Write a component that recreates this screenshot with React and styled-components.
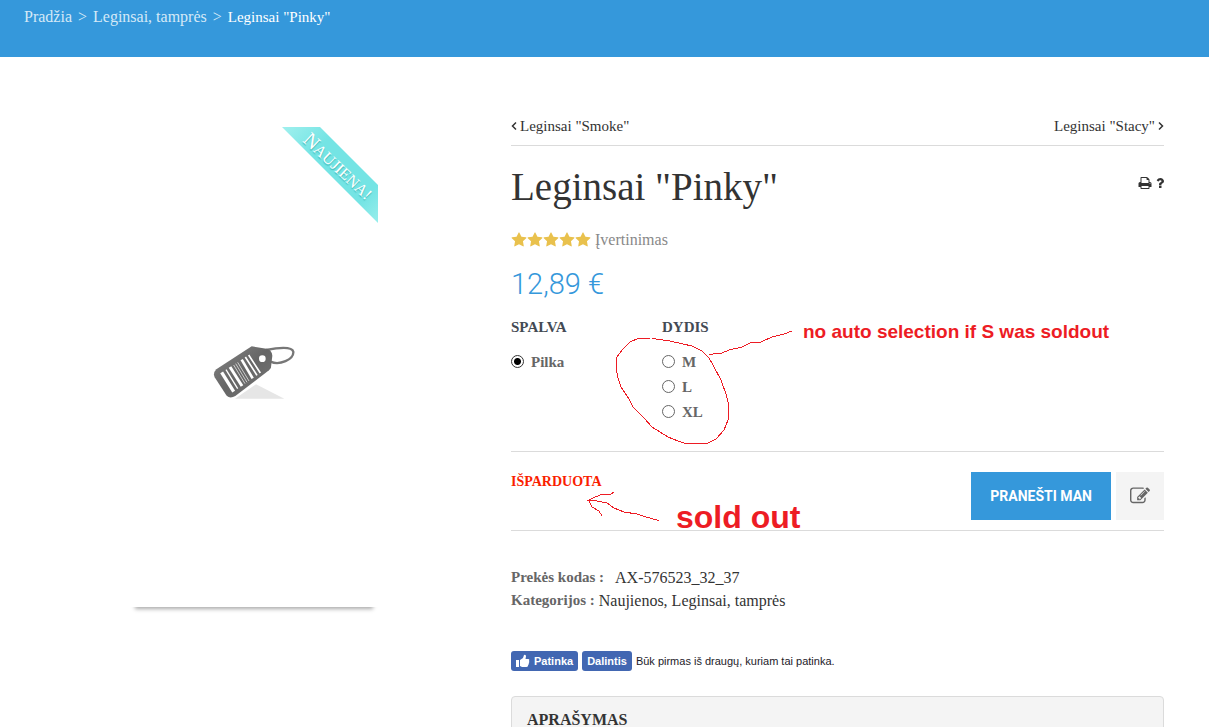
import { useState } from 'react'
import styled, { createGlobalStyle } from 'styled-components'

const GlobalStyle = createGlobalStyle`
    * {
        box-sizing: border-box;
    }
    html {
        scrollbar-width: none;
    }
    body {
        margin: 0;
        background: #fff;
        color: #333;
        font-family: "Liberation Serif", serif;
        font-size: 16px;
        line-height: 20px;
    }
    a {
        color: inherit;
        text-decoration: none;
    }
`

const sans = '"Liberation Sans", Arial, sans-serif'

const Breadcrumb = styled.nav`
    display: flex;
    gap: 6px;
    padding: 7px 24px 30px;
    background: #3598db;
    color: #d4e9f7;

    [aria-current] {
        color: #fff;
        font-size: 15px;
    }
`

const Main = styled.main`
    display: grid;
    grid-template-columns: 460fr 653fr;
    gap: 27px;
    align-items: start;
    padding: 56px 45px 0 24px;
`

const Photo = styled.div`
    position: relative;
    display: flex;
    align-items: center;
    justify-content: center;
    width: 248px;
    height: 480px;
    margin: 14px auto 0;
    padding-top: 8px;
    background: #fff;
    box-shadow: 0 7px 4px -5px #aaa;
`

const Ribbon = styled.svg`
    position: absolute;
    top: 0;
    right: 0;
`

const Pager = styled.nav`
    display: flex;
    justify-content: space-between;
    padding-bottom: 6px;
    border-bottom: 1px solid #dbdbdb;
    font-size: 15px;
    line-height: 26px;

    a {
        display: flex;
        align-items: center;
        gap: 3px;
    }
`

const TitleRow = styled.div`
    display: flex;
    justify-content: space-between;
    margin-top: 16px;
`

const Title = styled.h1`
    margin: 0;
    font-size: 39px;
    font-weight: 400;
    line-height: 50px;
`

const Tools = styled.div`
    display: flex;
    gap: 4px;
    padding-top: 14px;

    a {
        height: 14px;
    }
    svg {
        display: block;
    }
`

const Rating = styled.div`
    display: flex;
    align-items: center;
    margin-top: 18px;
    color: #888;

    span {
        margin-left: 4px;
    }
`

const Price = styled.div`
    margin-top: 16px;
    color: #3598db;
    font-family: Roboto, sans-serif;
    font-size: 29px;
    font-weight: 300;
    line-height: 36px;
`

const Options = styled.div`
    position: relative;
    display: grid;
    grid-template-columns: 151px 1fr;
    margin-top: 15px;
    padding-bottom: 27px;
    border-bottom: 1px solid #dbdbdb;
`

const Group = styled.fieldset`
    margin: 0;
    padding: 0;
    border: 0;

    legend {
        margin-bottom: 12px;
        padding: 0;
        color: #434a54;
        font-size: 15px;
        font-weight: 700;
    }
`

const Choice = styled.label`
    display: flex;
    align-items: center;
    gap: 7px;
    width: max-content;
    height: 25px;
    color: #666;
    font-size: 15px;
    font-weight: 700;
`

const Radio = styled.input`
    appearance: none;
    width: 13px;
    height: 13px;
    margin: 0;
    border: 1px solid #666;
    border-radius: 50%;
    background: #fff;

    &:checked {
        border-color: #333;
        background: radial-gradient(circle, #000 3px, #fff 4px);
    }
`

const Buy = styled.div`
    position: relative;
    display: flex;
    align-items: flex-start;
    gap: 5px;
    padding: 20px 0 10px;
    border-bottom: 1px solid #dbdbdb;
`

const Stock = styled.strong`
    flex: 1;
    color: #fa1e00;
    font-size: 14px;
`

const NotifyButton = styled.button`
    height: 48px;
    padding: 0 19px;
    border: 0;
    background: #3598db;
    color: #fff;
    font: 700 14px Roboto, sans-serif;
`

const EditButton = styled.button`
    display: flex;
    align-items: center;
    justify-content: center;
    width: 48px;
    height: 48px;
    padding: 0;
    border: 0;
    background: #f4f4f4;
    color: #666;
`

const Note = styled.span`
    position: absolute;
    top: ${p => p.$top}px;
    left: ${p => p.$left}px;
    color: #ed1c24;
    font-family: ${sans};
    font-size: ${p => p.$size}px;
    font-weight: 700;
    line-height: ${p => p.$size}px;
    white-space: nowrap;
`

const Scribble = styled.svg`
    position: absolute;
    top: ${p => p.$top}px;
    left: ${p => p.$left}px;
    fill: none;
    stroke: #ed1c24;
    shape-rendering: crispEdges;
    pointer-events: none;
`

const Details = styled.dl`
    margin: 35px 0 0;
    line-height: 23px;

    div {
        display: flex;
        gap: 4px;
    }
    div:first-child {
        gap: 11px;
    }
    dt {
        color: #666;
        font-size: 15px;
        font-weight: 700;
    }
    dd {
        margin: 0;
    }
`

const Social = styled.div`
    display: flex;
    align-items: center;
    gap: 4px;
    margin-top: 39px;
    color: #1d2129;
    font-family: ${sans};
    font-size: 11px;
`

const FbButton = styled.button`
    display: flex;
    align-items: center;
    gap: 4px;
    height: 20px;
    padding: 0 5px;
    border: 0;
    border-radius: 3px;
    background: #4267b2;
    color: #fff;
    font: 700 11px ${sans};
`

const Panel = styled.section`
    margin-top: 25px;
    padding: 11px 15px;
    border: 1px solid #dbdbdb;
    border-radius: 4px;
    background: #f4f4f4;

    h2 {
        margin: 0;
        font-size: 16px;
        line-height: 24px;
    }
`

const icons = {
    star: 'M1728 647q0 22-26 48l-363 354 86 500q1 7 1 20 0 21-10.500 35.500t-30.500 14.500q-19 0-40-12l-449-236-449 236q-22 12-40 12-21 0-31.500-14.500t-10.500-35.500q0-6 2-20l86-500-364-354q-25-27-25-48 0-37 56-46l502-73 225-455q19-41 49-41t49 41l225 455 502 73q56 9 56 46z',
    print: 'M448 1536h896v-256h-896v256zm0-640h896v-384h-160q-40 0-68-28t-28-68v-160h-640v640zm1152 64q0-26-19-45t-45-19-45 19-19 45 19 45 45 19 45-19 19-45zm128 0v416q0 13-9.500 22.500t-22.500 9.500h-224v160q0 40-28 68t-68 28h-960q-40 0-68-28t-28-68v-160h-224q-13 0-22.500-9.500t-9.500-22.500v-416q0-79 56.500-135.500t135.500-56.500h64v-544q0-40 28-68t68-28h672q40 0 88 20t76 48l152 152q28 28 48 76t20 88v256h64q79 0 135.500 56.500t56.500 135.500z',
    question: 'M1088 1256v240q0 16-12 28t-28 12h-240q-16 0-28-12t-12-28v-240q0-16 12-28t28-12h240q16 0 28 12t12 28zm316-600q0 54-15.500 101t-35 76.500-55 59.500-57.500 43.500-61 35.500q-41 23-68.500 65t-27.500 67q0 17-12 32.500t-28 15.500h-240q-15 0-25.500-18.500t-10.500-37.500v-45q0-83 65-156.500t143-108.500q59-27 84-56t25-76q0-42-46.500-74t-107.500-32q-65 0-108 29-35 25-107 115-13 16-31 16-12 0-25-8l-164-125q-13-10-15.500-25t5.500-28q160-266 464-266 80 0 161 31t146 83 106 127.500 41 158.500z',
    edit: 'M888 1184l116-116-152-152-116 116v56h96v96h56zm440-720q-16-16-33 1l-350 350q-17 17-1 33t33-1l350-350q17-17 1-33zm80 594v190q0 119-84.500 203.500t-203.500 84.500h-832q-119 0-203.500-84.500t-84.500-203.500v-832q0-119 84.500-203.500t203.500-84.500h832q63 0 117 25 15 7 18 23 3 17-9 29l-49 49q-14 14-32 8-23-6-45-6h-832q-66 0-113 47t-47 113v832q0 66 47 113t113 47h832q66 0 113-47t47-113v-126q0-13 9-22l64-64q15-15 35-7t20 29zm-96-738l288 288-672 672h-288v-288zm444 132l-92 92-288-288 92-92q28-28 68-28t68 28l152 152q28 28 28 68t-28 68z',
}

const Icon = ({ name, size, color = 'currentColor', crop = '0 0 1792 1792', width }) => (
    <svg width={width || size} height={size} viewBox={crop} fill={color} aria-hidden="true">
        <path d={icons[name]} />
    </svg>
)

const Chevron = ({ d }) => (
    <svg width="6" height="10" viewBox="0 0 6 10" fill="none" stroke="#333" strokeWidth="1.5" aria-hidden="true">
        <path d={d} />
    </svg>
)

const PriceTag = () => (
    <svg width="84" height="55" viewBox="36 27 252 165" role="img" aria-label="Leginsai">
        <defs>
            <linearGradient id="tag" x1="0" y1="0" x2="1" y2="1">
                <stop offset="0" stopColor="#858585" />
                <stop offset="0.5" stopColor="#666" />
                <stop offset="1" stopColor="#777" />
            </linearGradient>
        </defs>
        <path d="M105 191L168 148L253 191Z" fill="#e6e6e6" />
        <path d="M198 45C235 38 276 34 280 50C282 74 238 92 212 80" fill="none" stroke="#777" strokeWidth="7" />
        <path d="M155 34L204 42Q216 48 217 62L213 97Q212 102 207 106L106 183Q90 192 80 182L44 127Q38 114 49 103Z" fill="url(#tag)" />
        <circle cx="187" cy="71" r="10" fill="#fff" />
        <g stroke="#fff">
            <path d="M65 112L101 170" strokeWidth="10" />
            <path d="M78 104L113 161" strokeWidth="4" />
            <path d="M90 96L126 153" strokeWidth="9" />
            <path d="M101 90L135 146M107 86L141 142M113 82L147 138" strokeWidth="2" />
            <path d="M125 74L158 130" strokeWidth="8" />
            <path d="M136 66L171 121M146 60L181 114" strokeWidth="5" />
        </g>
    </svg>
)

const NewRibbon = () => (
    <Ribbon width="96" height="96" viewBox="0 0 96 96">
        <defs>
            <linearGradient id="ribbon" x1="0" y1="0" x2="1" y2="1">
                <stop offset="0" stopColor="#a0f0ee" />
                <stop offset="0.3" stopColor="#74e4e4" />
                <stop offset="0.8" stopColor="#74e4e4" />
                <stop offset="1" stopColor="#98eeec" />
            </linearGradient>
        </defs>
        <path d="M0 0H38L96 58V96Z" fill="url(#ribbon)" />
        <text
            transform="translate(20 14) rotate(43)"
            fill="#fff"
            fontFamily="Liberation Serif, serif"
            fontSize="20"
            style={{ textShadow: '1px 1px 1px #4bb' }}
        >
            N<tspan fontSize="16">AUJIENA!</tspan>
        </text>
    </Ribbon>
)

const sizes = ['M', 'L', 'XL']

const App = () => {
    const [size, setSize] = useState('')

    return (
        <>
            <GlobalStyle />
            <Breadcrumb aria-label="Breadcrumb">
                <a href="#home">Pradžia</a>
                <span>&gt;</span>
                <a href="#leginsai">Leginsai, tamprės</a>
                <span>&gt;</span>
                <a href="#pinky" aria-current="page">Leginsai "Pinky"</a>
            </Breadcrumb>
            <Main>
                <Photo>
                    <PriceTag />
                    <NewRibbon />
                </Photo>
                <div>
                    <Pager>
                        <a href="#smoke"><Chevron d="M5 1.500L1.500 5L5 8.500" />Leginsai "Smoke"</a>
                        <a href="#stacy">Leginsai "Stacy"<Chevron d="M1 1.500L4.500 5L1 8.500" /></a>
                    </Pager>
                    <TitleRow>
                        <Title>Leginsai "Pinky"</Title>
                        <Tools>
                            <a href="#print" aria-label="Spausdinti"><Icon name="print" size={14} /></a>
                            <a href="#ask" aria-label="Klausti"><Icon name="question" size={14} width={8} crop="384 0 1024 1792" /></a>
                        </Tools>
                    </TitleRow>
                    <Rating>
                        {[1, 2, 3, 4, 5].map(n => <Icon key={n} name="star" size={16} color="#e9c14d" />)}
                        <span>Įvertinimas</span>
                    </Rating>
                    <Price>12,89 €</Price>
                    <Options>
                        <Group>
                            <legend>SPALVA</legend>
                            <Choice>
                                <Radio type="radio" name="color" defaultChecked />
                                Pilka
                            </Choice>
                        </Group>
                        <Group>
                            <legend>DYDIS</legend>
                            {sizes.map(s => (
                                <Choice key={s}>
                                    <Radio type="radio" name="size" checked={size === s} onChange={() => setSize(s)} />
                                    {s}
                                </Choice>
                            ))}
                        </Group>
                        <Scribble $top={13} $left={104} width="180" height="116" viewBox="615 330 180 116">
                            <path d="M650 338.500H638L630 342L623 349L617 357L616 368L618 378L621 387L629 399L633 407L644 418L652 427L668 437L678 441L686 443.500H707L716 439L724 430L728 420L729 406L726 394L721 380L713 365L709 358L702 351L692 346L683 344L670 341L652 338.500" />
                            <path d="M709 354.500L722 353L729 350L742 347L750 343L761 342L772 337L784 334L792 331" />
                        </Scribble>
                        <Note $top={5} $left={292} $size={19}>no auto selection if S was soldout</Note>
                    </Options>
                    <Buy>
                        <Stock>IŠPARDUOTA</Stock>
                        <NotifyButton type="button">PRANEŠTI MAN</NotifyButton>
                        <EditButton type="button" aria-label="Redaguoti"><Icon name="edit" size={20} /></EditButton>
                        <Scribble $top={38} $left={76} width="74" height="34" viewBox="587 490 74 34">
                            <path d="M659 520.500L646 517L637 514L624 512L614 508L607 503L597 501L588 500.500L593 498L600 495L611 494L614 492M589 501L592 507L599 511L602 516" />
                        </Scribble>
                        <Note $top={49} $left={165} $size={32}>sold out</Note>
                    </Buy>
                    <Details>
                        <div>
                            <dt>Prekės kodas :</dt>
                            <dd>AX-576523_32_37</dd>
                        </div>
                        <div>
                            <dt>Kategorijos :</dt>
                            <dd><a href="#naujienos">Naujienos</a>, <a href="#leginsai">Leginsai, tamprės</a></dd>
                        </div>
                    </Details>
                    <Social>
                        <FbButton type="button">
                            <svg width="14" height="14" viewBox="0 0 14 14" fill="#fff" aria-hidden="true">
                                <path d="M0 6H3V13H0ZM4 6L7 4L8 1Q10 0 10 2.500L9.500 5H12.500Q14 5.500 13 7Q13.800 8 12.800 9Q13.200 10 12.200 11Q12.200 13 10.500 13H6L4 12Z" />
                            </svg>
                            Patinka
                        </FbButton>
                        <FbButton type="button">Dalintis</FbButton>
                        <span>Būk pirmas iš draugų, kuriam tai patinka.</span>
                    </Social>
                    <Panel>
                        <h2>APRAŠYMAS</h2>
                    </Panel>
                </div>
            </Main>
        </>
    )
}

export default App
